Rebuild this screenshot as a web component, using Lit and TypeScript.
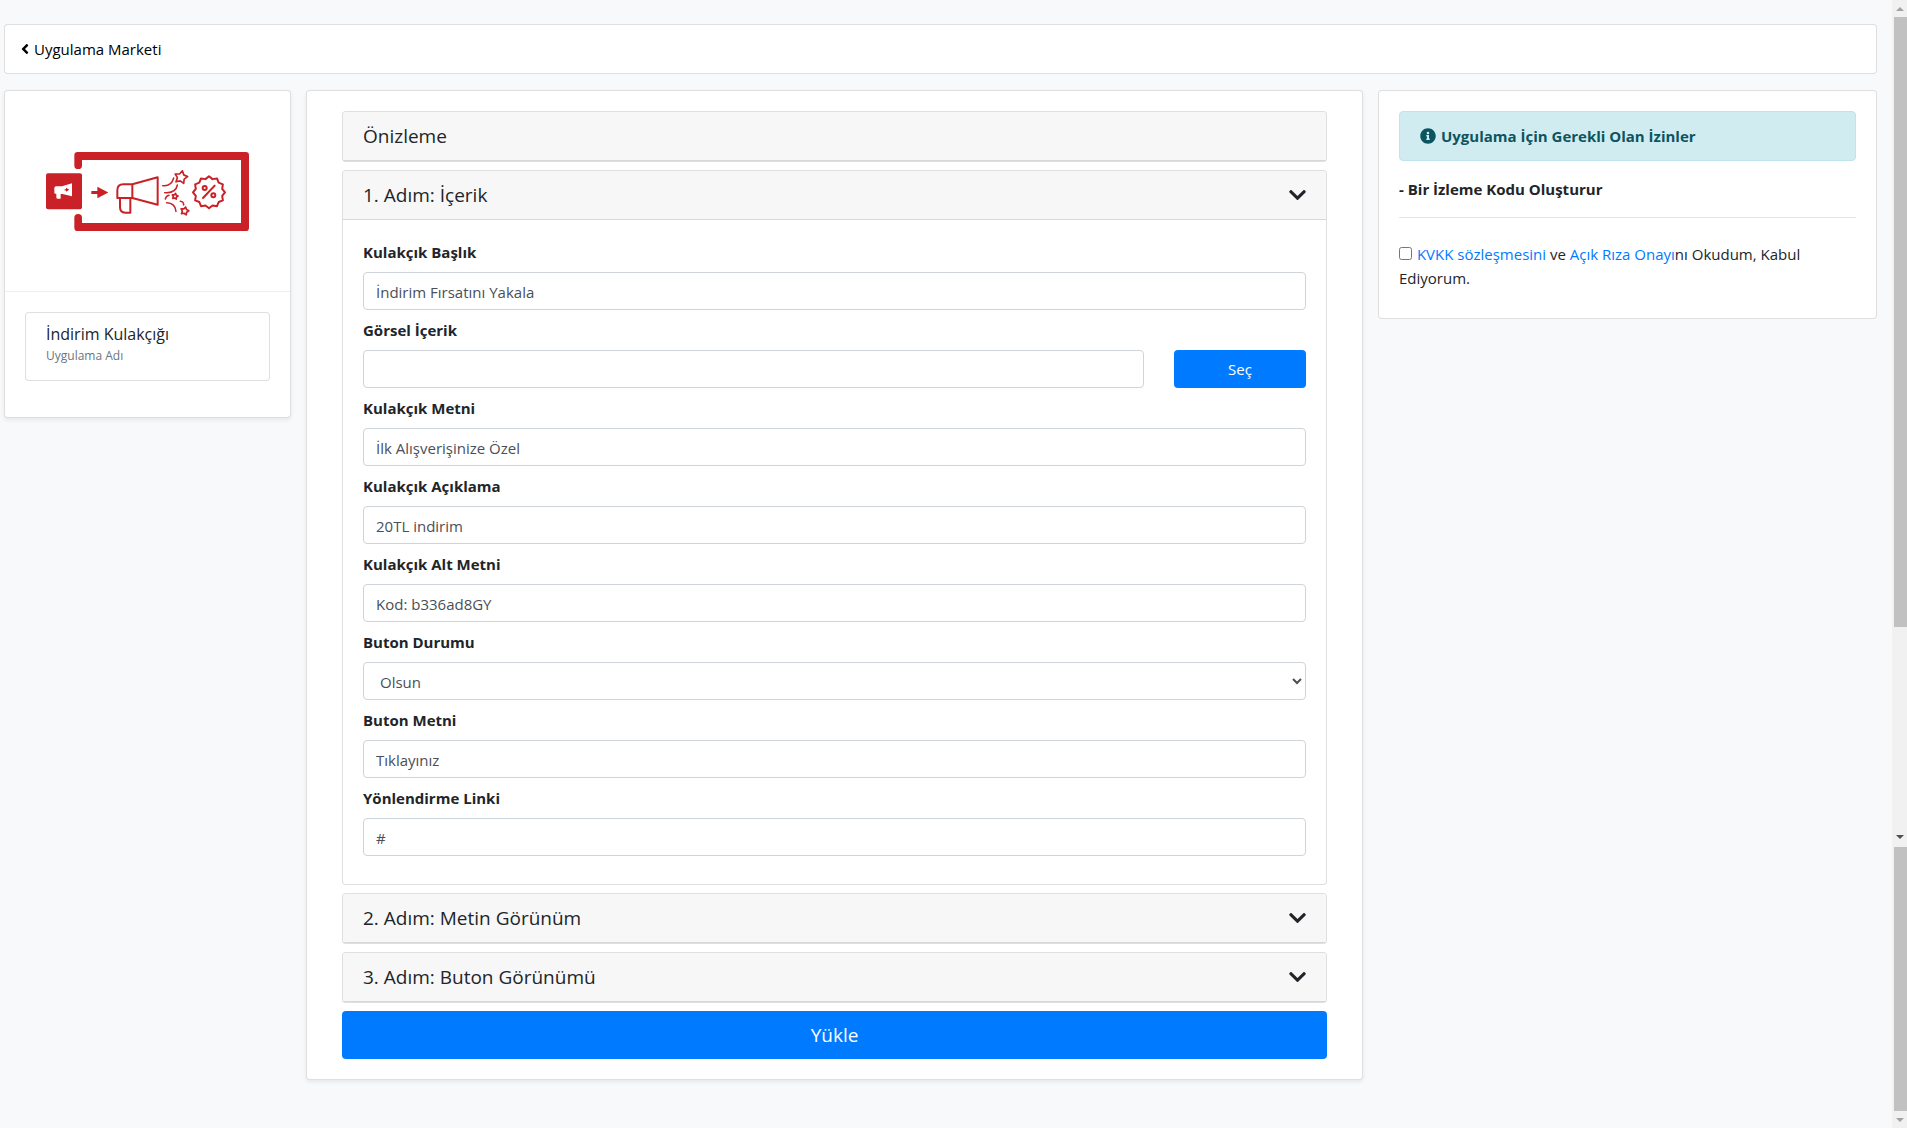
import { LitElement, html, css, svg, nothing } from "lit";
import { customElement, state } from "lit/decorators.js";

type Field = { id: string; label: string; kind: "text" | "file" | "select"; value: string };

const FIELDS: Field[] = [
  { id: "title", label: "Kulakçık Başlık", kind: "text", value: "İndirim Fırsatını Yakala" },
  { id: "image", label: "Görsel İçerik", kind: "file", value: "" },
  { id: "text", label: "Kulakçık Metni", kind: "text", value: "İlk Alışverişinize Özel" },
  { id: "description", label: "Kulakçık Açıklama", kind: "text", value: "20TL indirim" },
  { id: "subtext", label: "Kulakçık Alt Metni", kind: "text", value: "Kod: b336ad8GY" },
  { id: "button-state", label: "Buton Durumu", kind: "select", value: "Olsun" },
  { id: "button-text", label: "Buton Metni", kind: "text", value: "Tıklayınız" },
  { id: "link", label: "Yönlendirme Linki", kind: "text", value: "#" },
];

const STEPS = ["1. Adım: İçerik", "2. Adım: Metin Görünüm", "3. Adım: Buton Görünümü"];

const angleLeft = svg`<path d="M31.7 239l136-136c9.4-9.4 24.6-9.4 33.9 0l22.6 22.6c9.4 9.4 9.4 24.6 0 33.9L127.9 256l96.4 96.4c9.4 9.4 9.4 24.6 0 33.9L201.7 409c-9.4 9.4-24.6 9.4-33.9 0l-136-136c-9.5-9.4-9.5-24.6-.1-34z"/>`;
const chevronDown = svg`<path d="M207.029 381.476L12.686 187.132c-9.373-9.373-9.373-24.569 0-33.941l22.667-22.667c9.357-9.357 24.522-9.375 33.901-.04L224 284.505l154.745-154.021c9.379-9.335 24.544-9.317 33.901.04l22.667 22.667c9.373 9.373 9.373 24.569 0 33.941L240.971 381.476c-9.373 9.372-24.569 9.372-33.942 0z"/>`;
const infoCircle = svg`<path d="M256 8C119.043 8 8 119.083 8 256c0 136.997 111.043 248 248 248s248-111.003 248-248C504 119.083 392.957 8 256 8zm0 110c23.196 0 42 18.804 42 42s-18.804 42-42 42-42-18.804-42-42 18.804-42 42-42zm56 254c0 6.627-5.373 12-12 12h-88c-6.627 0-12-5.373-12-12v-24c0-6.627 5.373-12 12-12h12v-64h-12c-6.627 0-12-5.373-12-12v-24c0-6.627 5.373-12 12-12h64c6.627 0 12 5.373 12 12v100h12c6.627 0 12 5.373 12 12v24z"/>`;

/* Points of a regular star or toothed ring around (cx, cy). */
function starPoints(cx: number, cy: number, outer: number, inner: number, count: number, turn: number) {
  const points: string[] = [];
  for (let i = 0; i < count * 2; i++) {
    const r = i % 2 ? inner : outer;
    const a = (turn * Math.PI) / 180 - Math.PI / 2 + (i * Math.PI) / count;
    points.push(`${(cx + r * Math.cos(a)).toFixed(1)},${(cy + r * Math.sin(a)).toFixed(1)}`);
  }
  return points.join(" ");
}

@customElement("app-logo")
export class AppLogo extends LitElement {
  static styles = css`
    :host { display: block; width: 203px; height: 79px; }
    .art { display: block; width: 100%; height: 100%; }
  `;

  render() {
    return html`
      <svg class="art" viewBox="48 63 609 237" fill="none" stroke="#c92127" role="img" aria-label="İndirim Kulakçığı">
        <path d="M133 104V73Q133 63 143 63H647Q657 63 657 73V290Q657 300 647 300H143Q133 300 133 290V260Q133 249 144.500 249Q156 249 156 260V276H633V87H156V104Q156 114 144.500 114Q133 114 133 104Z" fill="#c92127" stroke="none"/>
        <rect x="48" y="127" width="108" height="108" rx="6" fill="#c92127" stroke="none"/>
        <path d="M73 171Q73 166 79 166H96L126 157V196L97 189H92V203H82Q79 203 79 199V188H76Q73 188 73 185Z" fill="#fff" stroke="none"/>
        <path d="M104 174.500h4v-4l10 6-10 6v-4h-4z" fill="#c92127" stroke="none"/>
        <path d="M184 180H202V167L235 184.500L202 202V189H184Z" fill="#c92127" stroke="none"/>
        <g stroke-width="6" stroke-linejoin="round">
          <path d="M262 200V178Q262 160 280 160H307L383 139V221L307 201H262Z"/>
          <path d="M307 160V201"/>
          <path d="M270 202V228Q270 245 286 245H301V202"/>
        </g>
        <g stroke-width="4.500" stroke-linecap="round">
          <path d="M398 164Q424 167 431 141"/>
          <path d="M404 185H411Q438 184 442 162"/>
          <path d="M406 204Q408 195 417 193"/>
          <path d="M410 215Q436 216 438 241"/>
          <path d="M451 211Q461 212 461 222"/>
        </g>
        <g stroke-width="5" stroke-linejoin="round">
          <polygon points="${starPoints(453, 139, 20, 11, 5, 12)}"/>
          <polygon points="${starPoints(435, 196, 9, 5, 5, 12)}"/>
          <polygon points="${starPoints(464, 240, 12.5, 7, 5, 14)}"/>
        </g>
        <polygon points="${starPoints(537, 184, 48, 41, 12, 0)}" stroke-width="6" stroke-linejoin="round"/>
        <g stroke-width="6">
          <circle cx="524" cy="171" r="6"/>
          <circle cx="550" cy="193" r="6"/>
          <path d="M554 164L519 201" stroke-linecap="round"/>
        </g>
      </svg>
    `;
  }
}

@customElement("scroll-rail")
export class ScrollRail extends LitElement {
  static styles = css`
    :host { display: flex; flex-direction: column; width: 15px; background: #f1f1f1; }
    .segment { display: flex; flex-direction: column; min-height: 0; }
    .upper { flex: 845; }
    .lower { flex: 283; }
    .cap { display: flex; align-items: center; justify-content: center; flex: none; height: 17px; }
    .thumb { margin-left: 2px; background: #c1c1c1; }
    .upper .thumb { flex: 610; }
    .upper .rest { flex: 201; }
    .lower .thumb { flex: 1; margin-top: 2px; }
    .up, .down { width: 0; border: 4px solid transparent; }
    .up { border-top: 0; border-bottom-color: #a3a3a3; }
    .down { border-bottom: 0; border-top-color: #505050; }
    .faded { border-top-color: #a3a3a3; }
  `;

  render() {
    return html`
      <div class="segment upper">
        <div class="cap"><span class="up"></span></div>
        <div class="thumb"></div>
        <div class="rest"></div>
        <div class="cap"><span class="down"></span></div>
      </div>
      <div class="segment lower">
        <div class="thumb"></div>
        <div class="cap"><span class="down faded"></span></div>
      </div>
    `;
  }
}

@customElement("app-root")
export class AppRoot extends LitElement {
  @state() private openStep = 0;

  static styles = css`
    :host {
      display: grid;
      grid-template-columns: minmax(0, 1fr) auto;
      min-height: 100vh;
      background: #f8f9fb;
      color: #212529;
      font-family: "Segoe UI", "Open Sans", "Noto Sans", sans-serif;
      font-size: 15px;
      line-height: 24px;
    }
    * { box-sizing: border-box; }
    a { color: #007bff; text-decoration: none; }
    h1, h2, p { margin: 0; }
    button, input, select { font: inherit; }
    .icon { flex: none; fill: currentColor; }

    .page { padding: 24px 15px 24px 4px; }
    .panel { background: #fff; border: 1px solid rgba(0, 0, 0, 0.125); border-radius: 4px; }
    .raised { box-shadow: 0 2px 4px rgba(0, 0, 0, 0.075); }

    .topbar { display: flex; padding: 12px 16px; }
    .back { display: flex; align-items: center; gap: 5px; color: #000; }

    .columns { display: grid; grid-template-columns: 287fr 1057fr 499fr; gap: 15px; align-items: start; margin-top: 16px; }

    .cover { display: grid; place-items: center; height: 200px; }
    .about { padding: 20px 20px 36px; border-top: 1px solid #eeeff0; }
    .name-box { padding: 12px 20px; }
    .name { font-size: 16px; font-weight: 500; line-height: 19px; }
    .caption { display: block; color: #6c757d; font-size: 12px; line-height: 24px; }

    .builder { display: flex; flex-direction: column; gap: 8px; padding: 20px 35px; }
    .step-head {
      display: flex; align-items: center; justify-content: space-between;
      width: 100%; padding: 12px 20px;
      border: 0; border-bottom: 1px solid rgba(0, 0, 0, 0.125); border-radius: 3px 3px 0 0;
      background: #f7f7f7; color: inherit; text-align: left;
      font-size: 19px; font-weight: 500; line-height: 24px;
    }
    .fields { display: flex; flex-direction: column; gap: 8px; padding: 20px 20px 28px; }
    .field { display: flex; flex-direction: column; gap: 8px; }
    .label { font-weight: 700; }
    .control {
      width: 100%; height: 38px; padding: 7px 12px 5px;
      border: 1px solid #ced4da; border-radius: 4px;
      background: #fff; color: #495057;
    }
    .picker { display: grid; grid-template-columns: 781fr 132fr; gap: 30px; }
    .button { border: 0; border-radius: 4px; background: #007bff; color: #fff; cursor: pointer; }
    .large { height: 48px; font-size: 19px; }

    .permissions { padding: 20px 20px 28px; }
    .notice {
      display: flex; align-items: center; gap: 5px; padding: 12px 20px;
      border: 1px solid #bee5eb; border-radius: 4px;
      background: #d1ecf1; color: #0c5460; font-weight: 700;
    }
    .permission { margin-top: 16px; font-weight: 700; }
    .rule { margin: 16px 0 24px; border: 0; border-top: 1px solid rgba(0, 0, 0, 0.1); }
    .consent { display: block; }
    .tick { width: 13px; height: 13px; margin: 0 1px 0 0; }
  `;

  private toggle(index: number) {
    this.openStep = this.openStep === index ? -1 : index;
  }

  private renderControl(field: Field) {
    if (field.kind === "select") {
      return html`<select class="control" id=${field.id}>
        <option selected>${field.value}</option>
      </select>`;
    }
    const input = html`<input class="control" id=${field.id} type="text" .value=${field.value} />`;
    return field.kind === "file"
      ? html`<div class="picker">${input}<button class="button" type="button">Seç</button></div>`
      : input;
  }

  private renderStep(title: string, index: number) {
    const open = this.openStep === index;
    return html`
      <section class="panel">
        <button class="step-head" type="button" aria-expanded=${open} @click=${() => this.toggle(index)}>
          <span>${title}</span>
          <svg class="icon" width="17" height="20" viewBox="0 0 448 512" aria-hidden="true">${chevronDown}</svg>
        </button>
        ${open && index === 0
          ? html`<div class="fields">
              ${FIELDS.map(
                (field) => html`<div class="field">
                  <label class="label" for=${field.id}>${field.label}</label>
                  ${this.renderControl(field)}
                </div>`
              )}
            </div>`
          : nothing}
      </section>
    `;
  }

  render() {
    return html`
      <main class="page">
        <nav class="panel topbar">
          <a class="back" href="#">
            <svg class="icon" width="8" height="16" viewBox="0 0 256 512" aria-hidden="true">${angleLeft}</svg>
            <span>Uygulama Marketi</span>
          </a>
        </nav>
        <div class="columns">
          <section class="panel raised">
            <div class="cover"><app-logo></app-logo></div>
            <div class="about">
              <div class="panel name-box">
                <h1 class="name">İndirim Kulakçığı</h1>
                <span class="caption">Uygulama Adı</span>
              </div>
            </div>
          </section>

          <form class="panel raised builder" @submit=${(e: Event) => e.preventDefault()}>
            <section class="panel"><h2 class="step-head">Önizleme</h2></section>
            ${STEPS.map((title, index) => this.renderStep(title, index))}
            <button class="button large" type="submit">Yükle</button>
          </form>

          <section class="panel permissions">
            <div class="notice">
              <svg class="icon" width="16" height="16" viewBox="0 0 512 512" aria-hidden="true">${infoCircle}</svg>
              <span>Uygulama İçin Gerekli Olan İzinler</span>
            </div>
            <p class="permission">- Bir İzleme Kodu Oluşturur</p>
            <hr class="rule" />
            <label class="consent">
              <input class="tick" type="checkbox" />
              <a href="#">KVKK sözleşmesini</a> ve <a href="#">Açık Rıza Onayı</a>nı Okudum, Kabul Ediyorum.
            </label>
          </section>
        </div>
      </main>
      <scroll-rail aria-hidden="true"></scroll-rail>
    `;
  }
}
